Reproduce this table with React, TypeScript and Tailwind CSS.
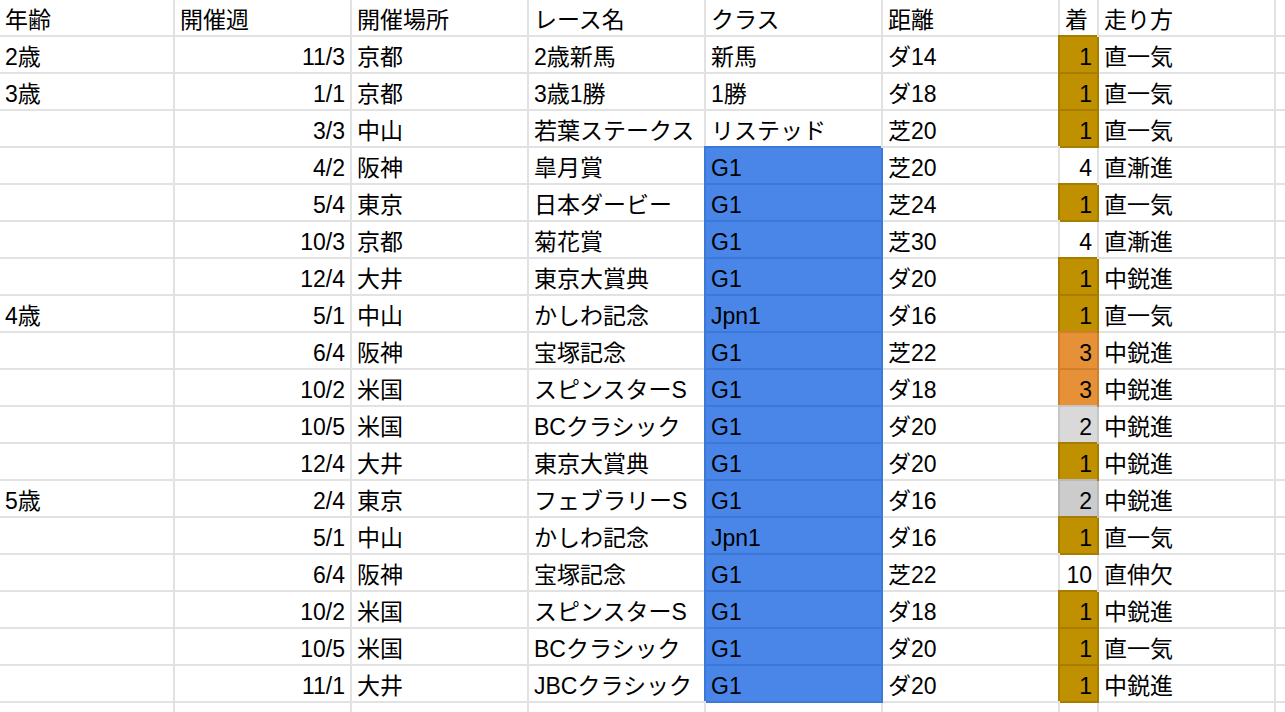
import React from "react";

type Fill = "gold" | "orange" | "silver" | "gray" | "blue" | undefined;

const fills: Record<string, string> = {
  gold: "bg-[#bf9000] border-[#a67d00] shadow-[-2px_-2px_0_0_#a67d00]",
  orange: "bg-[#e69138] border-[#cf7e2c] shadow-[-2px_-2px_0_0_#cf7e2c]",
  silver: "bg-[#d9d9d9] border-[#c6c6c6] shadow-[-2px_-2px_0_0_#c6c6c6]",
  gray: "bg-[#cccccc] border-[#b9b9b9] shadow-[-2px_-2px_0_0_#b9b9b9]",
  blue: "bg-[#4a86e8] border-[#3c78d8] shadow-[-2px_-2px_0_0_#3c78d8]",
};

interface Race {
  age: string;
  week: string;
  place: string;
  name: string;
  cls: string;
  dist: string;
  pos: string;
  posFill?: Fill;
  style: string;
}

const races: Race[] = [
  { age: "2歳", week: "11/3", place: "京都", name: "2歳新馬", cls: "新馬", dist: "ダ14", pos: "1", posFill: "gold", style: "直一気" },
  { age: "3歳", week: "1/1", place: "京都", name: "3歳1勝", cls: "1勝", dist: "ダ18", pos: "1", posFill: "gold", style: "直一気" },
  { age: "", week: "3/3", place: "中山", name: "若葉ステークス", cls: "リステッド", dist: "芝20", pos: "1", posFill: "gold", style: "直一気" },
  { age: "", week: "4/2", place: "阪神", name: "皐月賞", cls: "G1", dist: "芝20", pos: "4", style: "直漸進" },
  { age: "", week: "5/4", place: "東京", name: "日本ダービー", cls: "G1", dist: "芝24", pos: "1", posFill: "gold", style: "直一気" },
  { age: "", week: "10/3", place: "京都", name: "菊花賞", cls: "G1", dist: "芝30", pos: "4", style: "直漸進" },
  { age: "", week: "12/4", place: "大井", name: "東京大賞典", cls: "G1", dist: "ダ20", pos: "1", posFill: "gold", style: "中鋭進" },
  { age: "4歳", week: "5/1", place: "中山", name: "かしわ記念", cls: "Jpn1", dist: "ダ16", pos: "1", posFill: "gold", style: "直一気" },
  { age: "", week: "6/4", place: "阪神", name: "宝塚記念", cls: "G1", dist: "芝22", pos: "3", posFill: "orange", style: "中鋭進" },
  { age: "", week: "10/2", place: "米国", name: "スピンスターS", cls: "G1", dist: "ダ18", pos: "3", posFill: "orange", style: "中鋭進" },
  { age: "", week: "10/5", place: "米国", name: "BCクラシック", cls: "G1", dist: "ダ20", pos: "2", posFill: "silver", style: "中鋭進" },
  { age: "", week: "12/4", place: "大井", name: "東京大賞典", cls: "G1", dist: "ダ20", pos: "1", posFill: "gold", style: "中鋭進" },
  { age: "5歳", week: "2/4", place: "東京", name: "フェブラリーS", cls: "G1", dist: "ダ16", pos: "2", posFill: "gray", style: "中鋭進" },
  { age: "", week: "5/1", place: "中山", name: "かしわ記念", cls: "Jpn1", dist: "ダ16", pos: "1", posFill: "gold", style: "直一気" },
  { age: "", week: "6/4", place: "阪神", name: "宝塚記念", cls: "G1", dist: "芝22", pos: "10", style: "直伸欠" },
  { age: "", week: "10/2", place: "米国", name: "スピンスターS", cls: "G1", dist: "ダ18", pos: "1", posFill: "gold", style: "中鋭進" },
  { age: "", week: "10/5", place: "米国", name: "BCクラシック", cls: "G1", dist: "ダ20", pos: "1", posFill: "gold", style: "直一気" },
  { age: "", week: "11/1", place: "大井", name: "JBCクラシック", cls: "G1", dist: "ダ20", pos: "1", posFill: "gold", style: "中鋭進" },
];

function Cell({ children, right, fill }: { children?: React.ReactNode; right?: boolean; fill?: Fill }) {
  const color = fill ? fills[fill] : "bg-white border-[#e2e2e2]";
  return (
    <div
      className={`flex items-end overflow-hidden whitespace-nowrap border-r-2 border-b-2 px-[5px] pb-[3px] text-[23px] leading-[23px] text-black ${color} ${
        right ? "justify-end" : "justify-start"
      }`}
    >
      {children}
    </div>
  );
}

export default function App() {
  const headers = ["年齢", "開催週", "開催場所", "レース名", "クラス", "距離", "着", "走り方", ""];

  return (
    <div
      className="w-[1285px] h-[712px] overflow-hidden bg-white"
      style={{ fontFamily: '"Liberation Sans", Arial, "Noto Sans CJK JP", sans-serif' }}
    >
      <div className="grid w-max grid-cols-[175px_177px_177px_177px_177px_177px_39px_177px_177px] auto-rows-[37px]">
        {/* header row */}
        {headers.map((h, i) => (
          <Cell key={`h${i}`}>{h}</Cell>
        ))}

        {races.map((r, i) => {
          const isClassFilled = r.cls === "G1" || r.cls === "Jpn1";
          return (
            <React.Fragment key={i}>
              <Cell>{r.age}</Cell>
              <Cell right>{r.week}</Cell>
              <Cell>{r.place}</Cell>
              <Cell>{r.name}</Cell>
              <Cell fill={isClassFilled ? "blue" : undefined}>{r.cls}</Cell>
              <Cell>{r.dist}</Cell>
              <Cell right fill={r.posFill}>{r.pos}</Cell>
              <Cell>{r.style}</Cell>
              <Cell />
            </React.Fragment>
          );
        })}

        {/* partial empty row at the bottom */}
        {[...Array(9)].map((_, i) => (
          <Cell key={`e${i}`} />
        ))}
      </div>
    </div>
  );
}
